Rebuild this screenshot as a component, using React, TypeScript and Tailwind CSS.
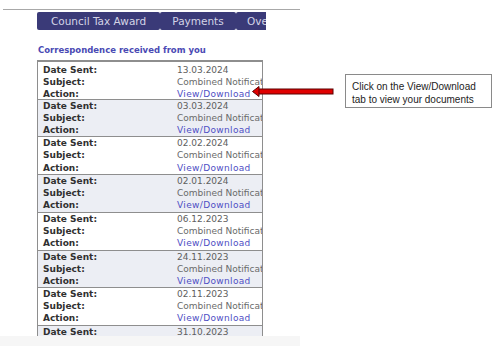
import React from "react";

const rows = [
  "13.03.2024",
  "03.03.2024",
  "02.02.2024",
  "02.01.2024",
  "06.12.2023",
  "24.11.2023",
  "02.11.2023",
  "31.10.2023",
];

const dv = { fontFamily: '"DejaVu Sans", Verdana, sans-serif' };

function Block({ date, i }: { date: string; i: number }) {
  return (
    <div
      className={`h-[37.71px] shrink-0 border-t-[1.5px] border-[#8e8e8e] pl-[5px] text-[9px] leading-[12.07px] ${
        i % 2 === 1 ? "bg-[#eceef4]" : "bg-white"
      } ${i === 0 ? "border-t-0 pt-[1.5px]" : ""}`}
      style={dv}
    >
      <div className="grid h-[12.07px] grid-cols-[134px_1fr] whitespace-nowrap">
        <span className="font-bold text-[#303030]">Date Sent:</span>
        <span className="text-[#5e5e5e]">{date}</span>
      </div>
      <div className="grid h-[12.07px] grid-cols-[134px_1fr] whitespace-nowrap">
        <span className="font-bold text-[#303030]">Subject:</span>
        <span className="text-[#6a6a6a]">Combined Notification</span>
      </div>
      <div className="grid h-[12.07px] grid-cols-[134px_1fr] whitespace-nowrap">
        <span className="font-bold text-[#303030]">Action:</span>
        <span className="tracking-[0.35px] text-[#4e4ec4]">View/Download</span>
      </div>
    </div>
  );
}

export default function App() {
  return (
    <div className="relative h-[346px] w-[500px] overflow-hidden bg-white">
      <div className="ml-[3px] mt-[9px] h-px w-[297px] bg-[#a8a8a8]" />
      <div
        className="ml-[37px] mt-[2px] flex h-[18px] w-[229px] overflow-hidden text-[10.5px] leading-[18px] text-[#d4d4e6]"
        style={dv}
      >
        <div className="w-[123px] shrink-0 rounded-[2px] bg-[#3a3a78] text-center">
          Council Tax Award
        </div>
        <div className="w-[76px] shrink-0 rounded-[2px] bg-[#3a3a78] text-center">
          Payments
        </div>
        <div className="flex-1 rounded-[2px] bg-[#3a3a78] pl-[11px] whitespace-nowrap">
          Ove
        </div>
      </div>
      <div
        className="ml-[38px] mt-[15px] h-[10px] text-[8.5px] font-bold leading-[10px] text-[#4a4ab4] whitespace-nowrap"
        style={dv}
      >
        Correspondence received from you
      </div>
      <div className="ml-[37px] mt-[5px] flex w-[226px] flex-col overflow-hidden border-[1.5px] border-[#8e8e8e]">
        {rows.map((d, i) => (
          <Block key={d} date={d} i={i} />
        ))}
      </div>

      <div className="absolute left-0 top-[336px] h-[10px] w-[300px] bg-[#f6f6f6]" />

      <svg
        className="absolute left-[251px] top-[85px]"
        width="86"
        height="14"
        viewBox="0 0 86 14"
      >
        <rect x="6" y="4" width="76" height="5" fill="#e00000" stroke="#5a0000" strokeWidth="1" />
        <polygon points="1.5,6.5 8,1.5 8,11.5" fill="#e00000" stroke="#5a0000" strokeWidth="1" />
      </svg>

      <div
        className="absolute left-[345px] top-[74px] h-[34px] w-[147px] border border-[#8a8a8a] bg-white pl-[6px] pt-[5px] text-[10px] leading-[13.3px] text-[#222]"
        style={{ fontFamily: '"Liberation Sans", Arial, sans-serif' }}
      >
        <div>Click on the View/Download</div>
        <div>tab to view your documents</div>
      </div>
    </div>
  );
}
